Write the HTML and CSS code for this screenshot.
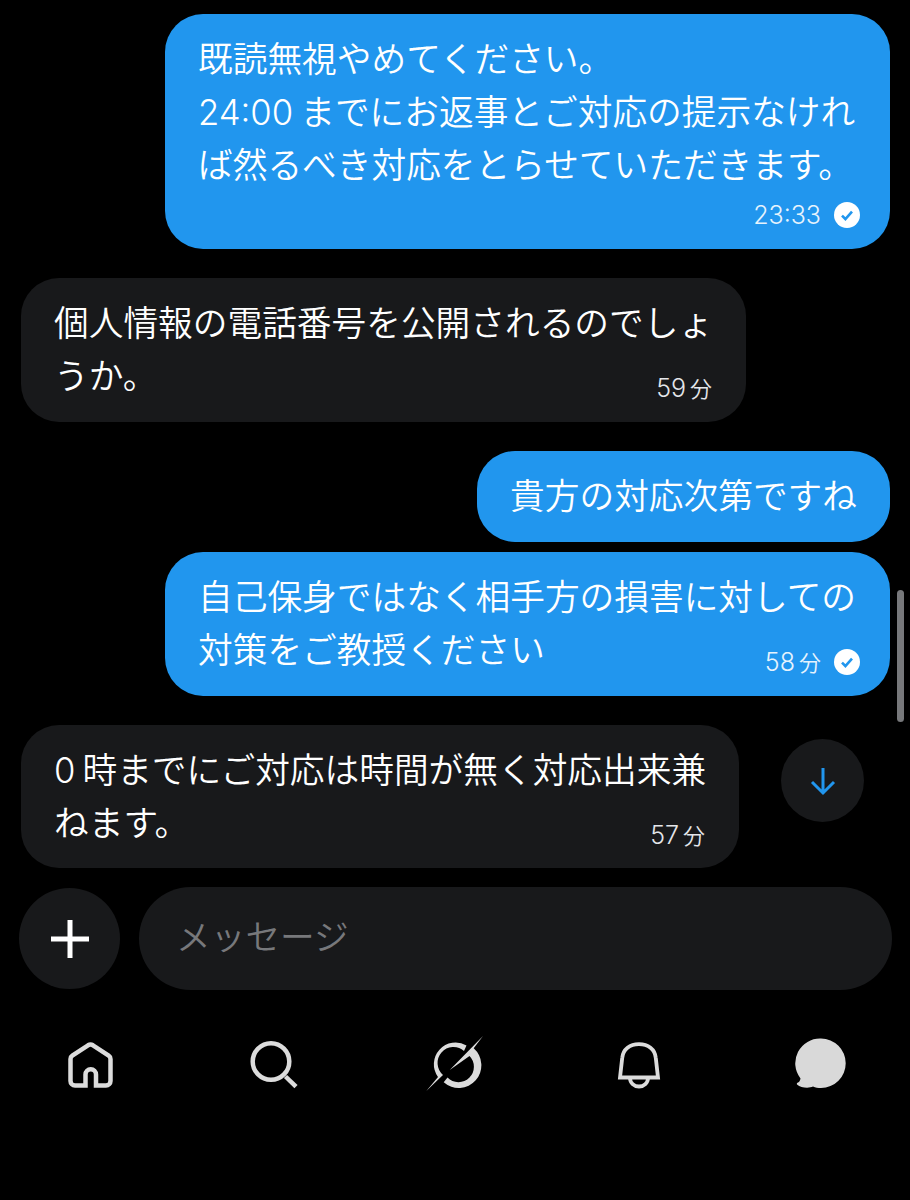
FILE: index.html
```html
<!DOCTYPE html>
<html lang="ja">
<head>
    <meta charset="UTF-8">
    <meta name="viewport" content="width=device-width, initial-scale=1.0">
    <title>メッセージ</title>
    <link rel="stylesheet" href="styles.css">
</head>
<body>
    <main class="chat">
        <div class="bubble sent wide">
            既読無視やめてください。<br>
            <span class="num">24:00</span>までにお返事とご対応の提示なけれ<br>
            ば然るべき対応をとらせていただきます。
            <div class="meta">
                <span>23:33</span>
                <svg class="read" viewBox="0 0 26 26"><circle cx="13" cy="13" r="13" fill="#fff"/><path d="M8 13.6l3.4 3.4 6.6-7.4" fill="none" stroke="#2196ee" stroke-width="2.6"/></svg>
            </div>
        </div>
        <div class="bubble received">
            個人情報の電話番号を公開されるのでしょ<br>
            うか。
            <div class="meta inline"><span>59<span class="unit">分</span></span></div>
        </div>
        <div class="bubble sent tight">貴方の対応次第ですね</div>
        <div class="bubble sent wide">
            自己保身ではなく相手方の損害に対しての<br>
            対策をご教授ください
            <div class="meta inline">
                <span>58<span class="unit">分</span></span>
                <svg class="read" viewBox="0 0 26 26"><circle cx="13" cy="13" r="13" fill="#fff"/><path d="M8 13.6l3.4 3.4 6.6-7.4" fill="none" stroke="#2196ee" stroke-width="2.6"/></svg>
            </div>
        </div>
        <div class="bubble received last">
            <span class="num">0</span>時までにご対応は時間が無く対応出来兼<br>
            ねます。
            <div class="meta inline"><span>57<span class="unit">分</span></span></div>
        </div>

        <div class="scrollbar"></div>
        <button class="to-bottom" type="button" aria-label="下へ移動">
            <svg width="28" height="30" viewBox="0 0 28 30"><path d="M14 2v25M3 16l11 11 11-11" fill="none" stroke="#2196ee" stroke-width="3"/></svg>
        </button>
    </main>

    <div class="composer">
        <button class="plus" type="button" aria-label="追加">
            <svg width="40" height="40" viewBox="0 0 40 40"><path d="M20 1v38M1 20h38" fill="none" stroke="#fff" stroke-width="5"/></svg>
        </button>
        <div class="field">メッセージ</div>
    </div>

    <nav class="tabs">
        <svg class="tab" viewBox="0 0 60 60"><path d="M24.5 50.5H14a4.5 4.5 0 0 1-4.5-4.5V24a4 4 0 0 1 1.8-3.4L27 10.3a5 5 0 0 1 5 0l15.7 10.3a4 4 0 0 1 1.8 3.4V46a4.5 4.5 0 0 1-4.5 4.5H35V39.5a5.25 5.25 0 0 0-10.5 0Z" fill="none" stroke="#dcdcdc" stroke-width="4.5"/></svg>
        <svg class="tab" viewBox="0 0 60 60"><circle cx="27" cy="26.5" r="18.3" fill="none" stroke="#dcdcdc" stroke-width="4.5"/><path d="M41.5 41.5L52 51.7" fill="none" stroke="#dcdcdc" stroke-width="4.5"/></svg>
        <svg class="tab" viewBox="0 0 60 60"><path d="M40.5 10.5A21.7 21.7 0 0 0 12 42L.3 56 17 40A15 15 0 0 1 38 16Z" fill="#dcdcdc"/><path d="M57 1L47.7 13.3A21.7 21.7 0 0 1 17.7 47.3L21.5 42.5A15 15 0 0 0 43.5 21L23.7 35Z" fill="#dcdcdc"/></svg>
        <svg class="tab" viewBox="0 0 60 60"><path d="M11 42.5H49L46.8 23C46 14 39 9.2 30 9.2S14 14 13.2 23Z" fill="none" stroke="#dcdcdc" stroke-width="3.8"/><path d="M21 43a9 8.5 0 0 0 18 0" fill="none" stroke="#dcdcdc" stroke-width="3.8"/></svg>
        <svg class="tab" viewBox="0 0 60 60"><path d="M30 3.6A24.7 24.7 0 1 1 30 53C27 53 24.5 52.5 22 51.5C18 53.5 10 53 6 49.5C5.5 48.5 6 48 7 47.5C8.5 47 9 45.5 9.5 43.5A24.7 24.7 0 0 1 30 3.6Z" fill="#d9d9d9"/></svg>
    </nav>
</body>
</html>
```

FILE: styles.css
```css
body {
    margin: 0;
    background-color: #000;
    color: #fff;
    font-family: "Inter", "Noto Sans CJK JP", sans-serif;
}
button {
    border: none;
    padding: 0;
    display: flex;
    align-items: center;
    justify-content: center;
}
.chat {
    position: relative;
    display: flex;
    flex-direction: column;
    padding: 14px 20px 0 21px;
    gap: 29px;
}
.bubble {
    width: fit-content;
    padding: 19px 33px;
    border-radius: 38px;
    font-size: 34.7px;
    font-weight: 350;
    line-height: 53px;
    white-space: nowrap;
}
.sent {
    align-self: flex-end;
    background-color: #2196ee;
}
.wide {
    min-width: 659px;
}
.received {
    align-self: flex-start;
    background-color: #18191b;
}
.tight {
    margin-bottom: -19px;
}
.last {
    height: 105px;
}
.num {
    margin-right: 7px;
}
.meta {
    display: flex;
    justify-content: flex-end;
    align-items: center;
    gap: 13px;
    height: 30px;
    padding-top: 8px;
    font-size: 25px;
    font-weight: 350;
    line-height: 30px;
    color: #e4e6ea;
}
.meta.inline {
    margin-top: -30px;
    padding-top: 0;
}
.received .meta {
    margin-right: 1px;
}
.sent .meta {
    color: #e6f3fd;
    margin-right: -3px;
}
.unit {
    margin-left: 4px;
    font-size: 22px;
}
.read {
    width: 26px;
    height: 26px;
}
.scrollbar {
    position: absolute;
    left: 897px;
    top: 590px;
    width: 7px;
    height: 132px;
    border-radius: 4px;
    background-color: #77787b;
}
.to-bottom {
    position: absolute;
    left: 781px;
    top: 739px;
    width: 83px;
    height: 83px;
    border-radius: 50%;
    background-color: #18191b;
}
.composer {
    display: flex;
    align-items: center;
    gap: 19px;
    margin-top: 19px;
    padding: 0 18px 0 19px;
}
.plus {
    flex: none;
    width: 101px;
    height: 101px;
    border-radius: 50%;
    background-color: #18191b;
}
.field {
    flex: 1;
    height: 103px;
    padding-left: 37px;
    border-radius: 52px;
    background-color: #18191b;
    color: #77787b;
    font-size: 34.7px;
    font-weight: 350;
    line-height: 100px;
}
.tabs {
    display: flex;
    justify-content: space-between;
    margin-top: 45px;
    padding: 0 59px 0 61px;
}
.tab {
    width: 60px;
    height: 60px;
}
```
